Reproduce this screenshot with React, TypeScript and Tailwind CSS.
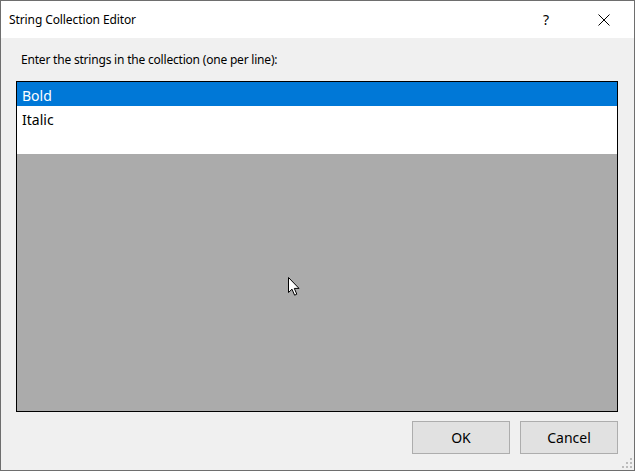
import React from "react";

const items = ["Bold", "Italic"];

const font = { fontFamily: '"Segoe UI", "Noto Sans", "Liberation Sans", sans-serif' };

function Cursor() {
  return (
    <svg width="13" height="20" viewBox="0 0 13 20" className="absolute left-[287px] top-[276px]">
      <path
        d="M0.5 0.5 L0.5 15.5 L4 12.2 L6.6 18.2 L8.8 17.2 L6.3 11.4 L11 11.4 Z"
        fill="#fff"
        stroke="#000"
        strokeWidth="1"
        strokeLinejoin="miter"
      />
    </svg>
  );
}

function SizeGrip() {
  // little dotted triangle in the lower right corner
  const dots = [
    [8, 0],
    [4, 4],
    [8, 4],
    [0, 8],
    [4, 8],
    [8, 8],
  ];
  return (
    <svg width="11" height="11" viewBox="0 0 11 11" className="absolute right-[1px] bottom-[1px]">
      {dots.map(([x, y], i) => (
        <rect key={i} x={x} y={y} width="2" height="2" fill="#bcbcbc" />
      ))}
    </svg>
  );
}

export default function App() {
  return (
    <div
      className="relative w-[635px] h-[471px] border border-[#6e6e6e] bg-[#f0f0f0] flex flex-col text-[12px] text-black"
      style={font}
    >
      <div className="h-[37px] bg-white flex items-center">
        <span className="ml-[8px] text-[12px] tracking-[-0.1px]">String Collection Editor</span>
        <span className="ml-auto w-[46px] text-center text-[14px]">?</span>
        <span className="w-[46px] ml-[12px] mr-[7px] flex items-center justify-center">
          <svg width="12" height="12" viewBox="0 0 12 12">
            <path d="M0.5 0.5 L11.5 11.5 M11.5 0.5 L0.5 11.5" stroke="#000" strokeWidth="1" />
          </svg>
        </span>
      </div>

      <div className="flex-1 flex flex-col pl-[15px] pr-[16px]">
        <div className="h-[43px] flex items-center pl-[5px] tracking-[-0.2px]">
          Enter the strings in the collection (one per line):
        </div>
        <div className="h-[331px] border border-black bg-[#ababab] flex flex-col">
          <div className="bg-white h-[72px] flex flex-col">
            {items.map((item, i) => (
              <div
                key={item}
                className={`h-[24px] flex items-center pl-[5px] pt-[2px] text-[14px] ${
                  i === 0 ? "bg-[#0078d7] text-white" : ""
                }`}
              >
                {item}
              </div>
            ))}
          </div>
        </div>
        <div className="flex justify-end gap-[10px] mt-[9px]">
          <button className="w-[98px] h-[33px] border border-[#adadad] bg-[#e1e1e1] text-[14px]">OK</button>
          <button className="w-[98px] h-[33px] border border-[#adadad] bg-[#e1e1e1] text-[14px]">Cancel</button>
        </div>
      </div>

      <SizeGrip />
      <Cursor />
    </div>
  );
}
